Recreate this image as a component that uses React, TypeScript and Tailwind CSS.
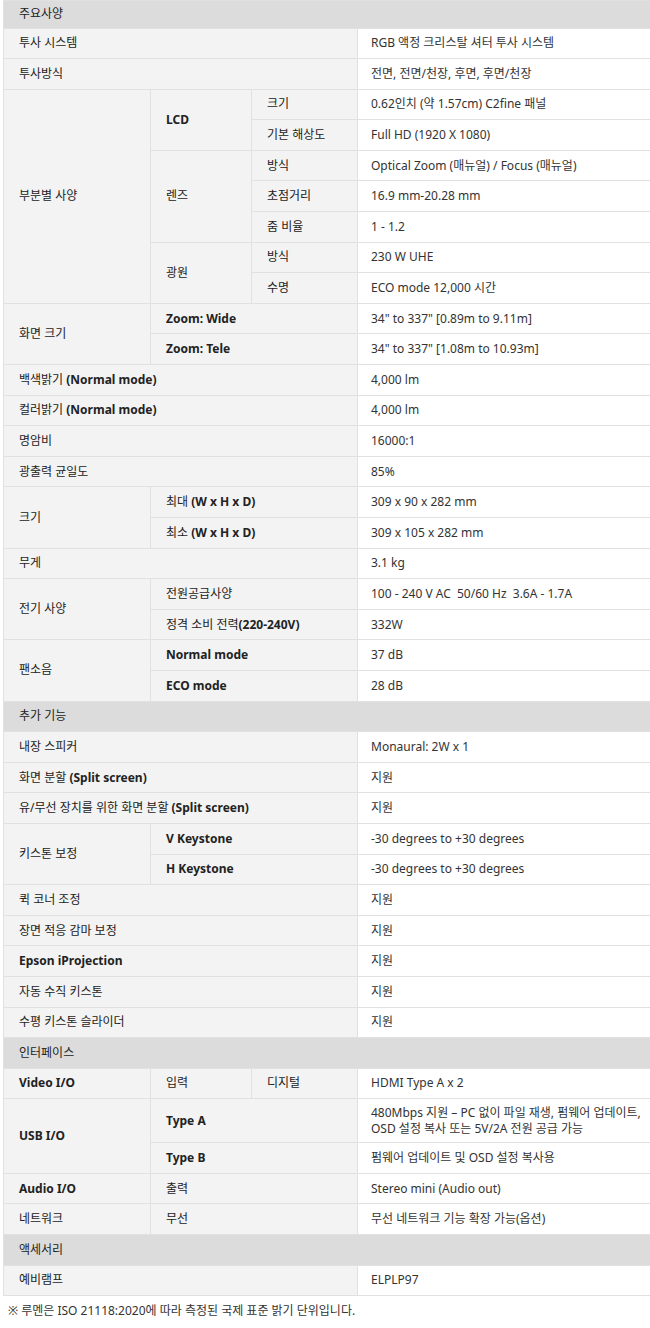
import React from "react";

const FONT = { fontFamily: '"Noto Sans", "Noto Sans CJK KR", sans-serif' };

// bold only the latin runs of a label, korean stays regular
const Label = ({ text }: { text: string }) => {
  const parts = text.split(/([\u3131-\uD79D][\u3131-\uD79D\s/]*)/).filter(Boolean);
  return (
    <>
      {parts.map((p, i) =>
        /[\u3131-\uD79D]/.test(p) ? (
          <span key={i}>{p}</span>
        ) : (
          <span key={i} className="font-bold">
            {p}
          </span>
        )
      )}
    </>
  );
};

const Th = ({
  text,
  colSpan,
  rowSpan,
}: {
  text: string;
  colSpan?: number;
  rowSpan?: number;
}) => (
  <th
    colSpan={colSpan}
    rowSpan={rowSpan}
    className="border border-[#e1e1e1] bg-[#f3f3f3] pl-[15px] text-left font-normal text-[#222] whitespace-nowrap"
  >
    <Label text={text} />
  </th>
);

const Td = ({ children }: { children: React.ReactNode }) => (
  <td className="border border-[#e1e1e1] bg-white pl-[13px] text-[#333] whitespace-pre">
    {children}
  </td>
);

const Section = ({ title, first }: { title: string; first?: boolean }) => (
  <tr className={first ? "h-[27.5px]" : "h-[30.6px]"}>
    <th
      colSpan={4}
      className="border border-[#e1e1e1] bg-[#dcdcdc] pl-[15px] text-left font-normal text-[#222]"
    >
      {title}
    </th>
  </tr>
);

const Row = ({ children }: { children: React.ReactNode }) => (
  <tr className="h-[30.6px]">{children}</tr>
);

export default function App() {
  return (
    <div className="min-h-[1328px] bg-white text-[12px] leading-[16px]" style={FONT}>
      <table className="ml-[3px] w-[647px] table-fixed border-collapse">
        <colgroup>
          <col className="w-[147px]" />
          <col className="w-[101px]" />
          <col className="w-[106px]" />
          <col className="w-[293px]" />
        </colgroup>
        <tbody>
          <Section title="주요사양" first />
          <Row>
            <Th text="투사 시스템" colSpan={3} />
            <Td>RGB 액정 크리스탈 셔터 투사 시스템</Td>
          </Row>
          <Row>
            <Th text="투사방식" colSpan={3} />
            <Td>전면, 전면/천장, 후면, 후면/천장</Td>
          </Row>
          <Row>
            <Th text="부분별 사양" rowSpan={7} />
            <Th text="LCD" rowSpan={2} />
            <Th text="크기" />
            <Td>0.62인치 (약 1.57cm) C2fine 패널</Td>
          </Row>
          <Row>
            <Th text="기본 해상도" />
            <Td>Full HD (1920 X 1080)</Td>
          </Row>
          <Row>
            <Th text="렌즈" rowSpan={3} />
            <Th text="방식" />
            <Td>Optical Zoom (매뉴얼) / Focus (매뉴얼)</Td>
          </Row>
          <Row>
            <Th text="초점거리" />
            <Td>16.9 mm-20.28 mm</Td>
          </Row>
          <Row>
            <Th text="줌 비율" />
            <Td>1 - 1.2</Td>
          </Row>
          <Row>
            <Th text="광원" rowSpan={2} />
            <Th text="방식" />
            <Td>230 W UHE</Td>
          </Row>
          <Row>
            <Th text="수명" />
            <Td>ECO mode 12,000 시간</Td>
          </Row>
          <Row>
            <Th text="화면 크기" rowSpan={2} />
            <Th text="Zoom: Wide" colSpan={2} />
            <Td>34" to 337" [0.89m to 9.11m]</Td>
          </Row>
          <Row>
            <Th text="Zoom: Tele" colSpan={2} />
            <Td>34" to 337" [1.08m to 10.93m]</Td>
          </Row>
          <Row>
            <Th text="백색밝기 (Normal mode)" colSpan={3} />
            <Td>4,000 lm</Td>
          </Row>
          <Row>
            <Th text="컬러밝기 (Normal mode)" colSpan={3} />
            <Td>4,000 lm</Td>
          </Row>
          <Row>
            <Th text="명암비" colSpan={3} />
            <Td>16000:1</Td>
          </Row>
          <Row>
            <Th text="광출력 균일도" colSpan={3} />
            <Td>85%</Td>
          </Row>
          <Row>
            <Th text="크기" rowSpan={2} />
            <Th text="최대 (W x H x D)" colSpan={2} />
            <Td>309 x 90 x 282 mm</Td>
          </Row>
          <Row>
            <Th text="최소 (W x H x D)" colSpan={2} />
            <Td>309 x 105 x 282 mm</Td>
          </Row>
          <Row>
            <Th text="무게" colSpan={3} />
            <Td>3.1 kg</Td>
          </Row>
          <Row>
            <Th text="전기 사양" rowSpan={2} />
            <Th text="전원공급사양" colSpan={2} />
            <Td>100 - 240 V AC  50/60 Hz  3.6A - 1.7A</Td>
          </Row>
          <Row>
            <Th text="정격 소비 전력(220-240V)" colSpan={2} />
            <Td>332W</Td>
          </Row>
          <Row>
            <Th text="팬소음" rowSpan={2} />
            <Th text="Normal mode" colSpan={2} />
            <Td>37 dB</Td>
          </Row>
          <Row>
            <Th text="ECO mode" colSpan={2} />
            <Td>28 dB</Td>
          </Row>

          <Section title="추가 기능" />
          <Row>
            <Th text="내장 스피커" colSpan={3} />
            <Td>Monaural: 2W x 1</Td>
          </Row>
          <Row>
            <Th text="화면 분할 (Split screen)" colSpan={3} />
            <Td>지원</Td>
          </Row>
          <Row>
            <Th text="유/무선 장치를 위한 화면 분할 (Split screen)" colSpan={3} />
            <Td>지원</Td>
          </Row>
          <Row>
            <Th text="키스톤 보정" rowSpan={2} />
            <Th text="V Keystone" colSpan={2} />
            <Td>-30 degrees to +30 degrees</Td>
          </Row>
          <Row>
            <Th text="H Keystone" colSpan={2} />
            <Td>-30 degrees to +30 degrees</Td>
          </Row>
          <Row>
            <Th text="퀵 코너 조정" colSpan={3} />
            <Td>지원</Td>
          </Row>
          <Row>
            <Th text="장면 적응 감마 보정" colSpan={3} />
            <Td>지원</Td>
          </Row>
          <Row>
            <Th text="Epson iProjection" colSpan={3} />
            <Td>지원</Td>
          </Row>
          <Row>
            <Th text="자동 수직 키스톤" colSpan={3} />
            <Td>지원</Td>
          </Row>
          <Row>
            <Th text="수평 키스톤 슬라이더" colSpan={3} />
            <Td>지원</Td>
          </Row>

          <Section title="인터페이스" />
          <Row>
            <Th text="Video I/O" />
            <Th text="입력" />
            <Th text="디지털" />
            <Td>HDMI Type A x 2</Td>
          </Row>
          <tr className="h-[44px]">
            <Th text="USB I/O" rowSpan={2} />
            <Th text="Type A" colSpan={2} />
            <Td>
              480Mbps 지원 – PC 없이 파일 재생, 펌웨어 업데이트,
              <br />
              OSD 설정 복사 또는 5V/2A 전원 공급 가능
            </Td>
          </tr>
          <Row>
            <Th text="Type B" colSpan={2} />
            <Td>펌웨어 업데이트 및 OSD 설정 복사용</Td>
          </Row>
          <Row>
            <Th text="Audio I/O" />
            <Th text="출력" colSpan={2} />
            <Td>Stereo mini (Audio out)</Td>
          </Row>
          <Row>
            <Th text="네트워크" />
            <Th text="무선" colSpan={2} />
            <Td>무선 네트워크 기능 확장 가능(옵션)</Td>
          </Row>

          <Section title="액세서리" />
          <Row>
            <Th text="예비램프" colSpan={3} />
            <Td>ELPLP97</Td>
          </Row>
        </tbody>
      </table>
      <p className="mt-[7px] pl-[8px] text-[#333]">
        ※ 루멘은 ISO 21118:2020에 따라 측정된 국제 표준 밝기 단위입니다.
      </p>
    </div>
  );
}
